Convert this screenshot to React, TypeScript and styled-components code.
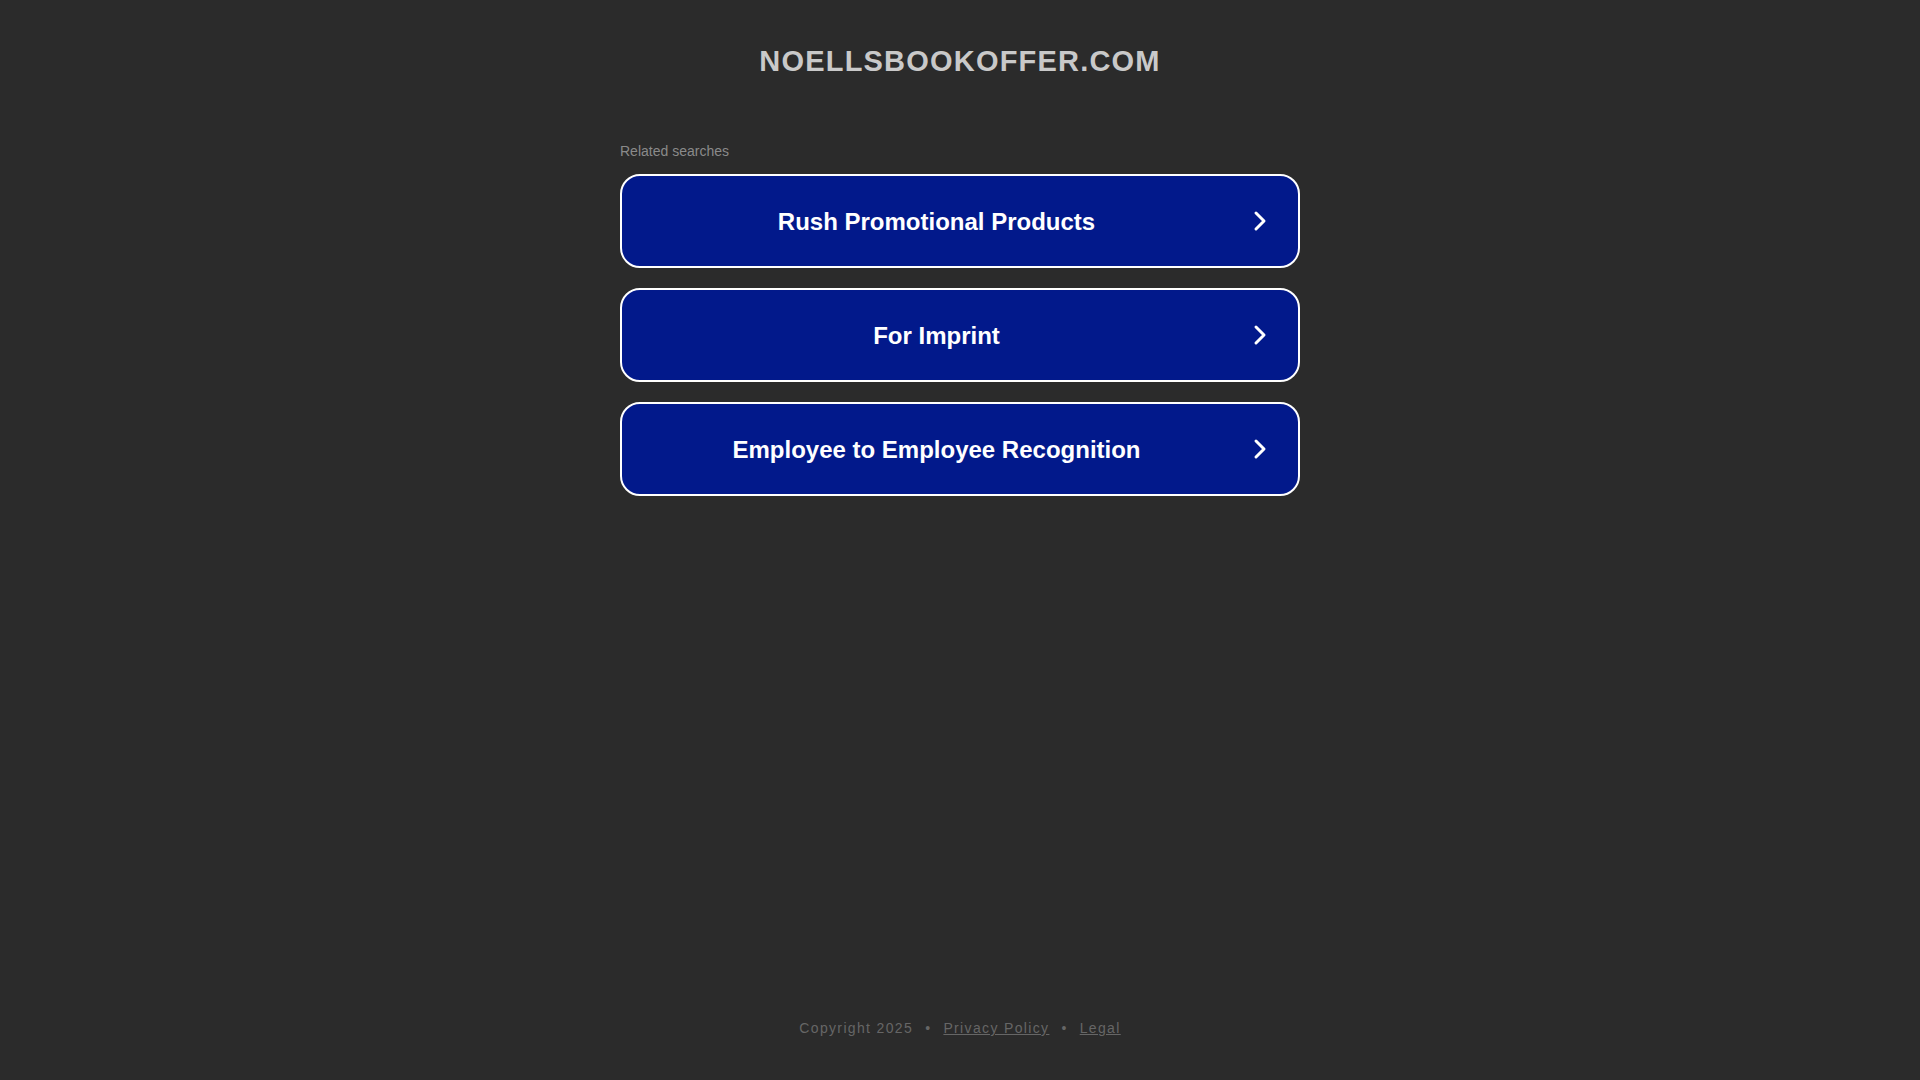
import React from 'react';
import styled, { createGlobalStyle } from 'styled-components';

const colors = {
    page: '#2b2b2b',
    title: '#c9c9c9',
    muted: '#8a8a8a',
    footer: '#666666',
    blue: '#02198b',
    white: '#ffffff'
};

const GlobalStyle = createGlobalStyle`
  html, body {
    margin: 0;
    padding: 0;
    background: ${colors.page};
    font-family: "Liberation Sans", Arial, sans-serif;
  }
`;

const Page = styled.div`
  display: flex;
  flex-direction: column;
  align-items: center;
  min-height: 100vh;
  box-sizing: border-box;
  padding-top: 43px;
`;

const Title = styled.h1`
  margin: 0;
  font-size: 29px;
  line-height: 36px;
  font-weight: 700;
  letter-spacing: 1.2px;
  color: ${colors.title};
  text-transform: uppercase;
`;

const Results = styled.div`
  display: flex;
  flex-direction: column;
  width: 680px;
  margin-top: 64px;
`;

const Caption = styled.div`
  font-size: 14px;
  line-height: 16px;
  color: ${colors.muted};
  margin-bottom: 15px;
`;

const List = styled.div`
  display: flex;
  flex-direction: column;
  gap: 20px;
`;

const SearchLink = styled.a`
  display: flex;
  align-items: center;
  height: 94px;
  box-sizing: border-box;
  padding: 0 31px 0 0;
  border: 2px solid ${colors.white};
  border-radius: 20px;
  background: ${colors.blue};
  color: ${colors.white};
  text-decoration: none;
  cursor: pointer;
`;

const Label = styled.span`
  flex: 1;
  margin-right: 2px;
  padding-top: 2px;
  text-align: center;
  font-size: 24px;
  font-weight: 700;
`;

const Footer = styled.footer`
  margin-top: auto;
  padding-bottom: 42px;
  display: flex;
  align-items: center;
  font-size: 14px;
  line-height: 20px;
  letter-spacing: 1.35px;
  color: ${colors.footer};
`;

const Dot = styled.span`
  margin: 0 12px;
`;

const FooterLink = styled.a`
  color: ${colors.footer};
  text-decoration: underline;
`;

function Chevron(): JSX.Element {
    return (
        <svg width="14" height="22" viewBox="0 0 14 22" fill="none">
            <polyline points="3,3 11,11 3,19" stroke={colors.white} strokeWidth="3"
                strokeLinecap="round" strokeLinejoin="round" />
        </svg>
    );
}

const searches = [
    'Rush Promotional Products',
    'For Imprint',
    'Employee to Employee Recognition'
];

export default function App(): JSX.Element {
    return (
        <>
            <GlobalStyle />
            <Page>
                <Title>noellsbookoffer.com</Title>
                <Results>
                    <Caption>Related searches</Caption>
                    <List>
                        {searches.map(s => (
                            <SearchLink key={s}>
                                <Label>{s}</Label>
                                <Chevron />
                            </SearchLink>
                        ))}
                    </List>
                </Results>
                <Footer>
                    <span>Copyright 2025</span>
                    <Dot>•</Dot>
                    <FooterLink>Privacy Policy</FooterLink>
                    <Dot>•</Dot>
                    <FooterLink>Legal</FooterLink>
                </Footer>
            </Page>
        </>
    );
}
